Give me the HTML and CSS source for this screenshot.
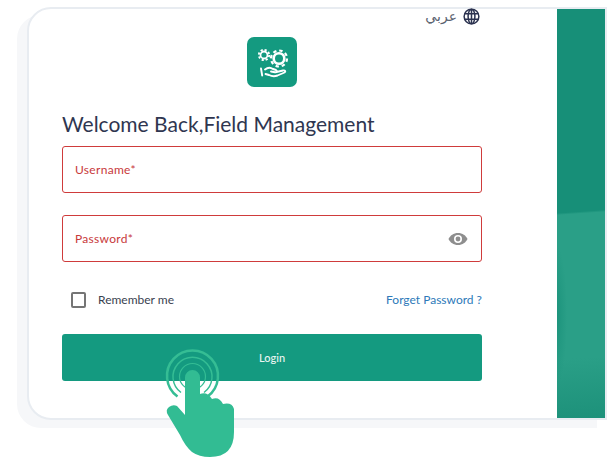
FILE: index.html
```html
<!DOCTYPE html>
<html lang="en">
<head>
<meta charset="utf-8">
<title>Login</title>
<link rel="stylesheet" href="styles.css">
</head>
<body>
<div class="card">
  <main class="form">
    <div class="lang">
      <span class="lang-text" lang="ar">عربي</span>
      <svg class="globe" viewBox="0 0 18 18" aria-hidden="true">
        <circle cx="9" cy="9" r="7.800"/>
        <ellipse cx="9" cy="9" rx="3.600" ry="7.800"/>
        <path d="M1.800 6.200h14.400M1.800 11.800h14.400M9 1.200v15.600"/>
      </svg>
    </div>
    <div class="logo">
      <svg viewBox="0 0 50 50" aria-hidden="true">
        <circle class="gear" cx="17" cy="18" r="3.500"/>
        <circle class="teeth small" cx="17" cy="18" r="5.200"/>
        <circle class="gear big" cx="32" cy="21.500" r="5.300"/>
        <circle class="teeth large" cx="32" cy="21.500" r="8"/>
        <path class="hand" d="M14 31.500l1.200 7M18 32.500c3-2.500 5.500-2.300 8-.5l3 1c1.500.8.800 2.500-1 2.300l-4-.8M29.500 35l6.500-1.500c2.300-.4 3 1 1.500 2l-7 3c-3 1.200-6.500.5-8.500-.5l-3.500-1"/>
      </svg>
    </div>
    <h1 class="title">Welcome Back,Field Management</h1>
    <div class="field">
      <span class="label">Username*</span>
    </div>
    <div class="field field-password">
      <span class="label">Password*</span>
      <svg class="eye" viewBox="0 0 20 14" aria-hidden="true">
        <path d="M10 1C5.600 1 2 3.600.5 7 2 10.400 5.600 13 10 13s8-2.600 9.500-6C18 3.600 14.400 1 10 1z"/>
        <circle class="eye-white" cx="10" cy="7" r="4"/>
        <circle cx="10" cy="7" r="2.400"/>
      </svg>
    </div>
    <div class="options">
      <label class="remember"><span class="checkbox"></span><span>Remember me</span></label>
      <a class="forgot">Forget Password ?</a>
    </div>
    <button class="login" type="button">Login</button>
  </main>
  <aside class="panel"></aside>
</div>
<svg class="hand-cursor" viewBox="160 345 80 115" aria-hidden="true">
  <g class="rings">
    <path class="ring-outer" d="M177.500 396.500A25.500 25.500 0 1 1 207.500 396.500"/>
    <path class="ring-mid" d="M181 392.500A19.500 19.500 0 1 1 204 392.500"/>
    <circle cx="192.500" cy="376.500" r="13"/>
  </g>
  <path class="finger" d="M185 377.500A7.500 7.500 0 0 1 200 377.500V394Q207 391 212 399Q219 396 223 404Q232 402 234 409V432Q234 457 210 457Q199 457 192 452Q185 446 180 435L168 415Q165 410 169 407Q173 404 177 406L185 415Z"/>
</svg>
</body>
</html>
```
FILE: styles.css
```css
* { box-sizing: border-box; }
html, body { margin: 0; padding: 0; }
body {
  width: 612px;
  height: 464px;
  background: #fff;
  padding: 7px 0 0 27px;
  font-family: "Lato", "Noto Sans", sans-serif;
  position: relative;
  overflow: hidden;
}
.card {
  width: 580px;
  height: 413px;
  display: flex;
  background: #fff;
  border: 2px solid #e8ecf1;
  border-radius: 24px 0 0 24px;
  box-shadow: -10px 8px 0 #f6f7f9;
}
.form {
  width: 528px;
  padding: 0 75px 0 33px;
  display: flex;
  flex-direction: column;
}
.lang {
  height: 14px;
  display: flex;
  justify-content: flex-end;
  align-items: center;
  gap: 6px;
  padding-right: 2px;
}
.lang-text { font-family: "DejaVu Sans", sans-serif; font-size: 14px; color: #5b6270; line-height: 14px; }
.globe { width: 17px; height: 17px; flex: none; fill: none; stroke: #2c3350; stroke-width: 1.6; }
.logo {
  width: 50px;
  height: 50px;
  margin: 14px auto 0;
  background: #149a80;
  border-radius: 7px;
}
.logo svg { display: block; width: 50px; height: 50px; fill: none; stroke: #fff; stroke-linecap: round; stroke-linejoin: round; }
.gear { stroke-width: 1.800; }
.gear.big { stroke-width: 2.600; }
.teeth { stroke-linecap: butt; }
.teeth.small { stroke-width: 1.800; stroke-dasharray: 2.200 1.880; }
.teeth.large { stroke-width: 2.200; stroke-dasharray: 3.400 2.880; }
.hand { stroke-width: 1.900; }
.title {
  margin: 22px 0 0;
  font-size: 21px;
  line-height: 30px;
  font-weight: 400;
  color: #2f3650;
  white-space: nowrap;
}
.field {
  height: 47px;
  margin-top: 7px;
  border: 1px solid #cf3b3b;
  border-radius: 3px;
  padding: 0 12px;
  display: flex;
  align-items: center;
  justify-content: space-between;
}
.field-password { margin-top: 22px; }
.label { font-size: 12px; color: #c8393b; letter-spacing: .3px; }
.eye { width: 20px; height: 14px; fill: #8e8e8e; margin-right: 1px; }
.eye-white { fill: #fff; }
.options {
  display: flex;
  justify-content: space-between;
  align-items: center;
  margin-top: 27px;
  height: 21px;
}
.remember { display: flex; align-items: center; gap: 12px; font-size: 12px; color: #3a3f50; padding-left: 9px; }
.checkbox { width: 15px; height: 16px; border: 2px solid #757575; border-radius: 2px; }
.forgot { font-size: 12px; color: #2d79b9; }
.login {
  height: 47px;
  margin-top: 24px;
  border: 0;
  border-radius: 3px;
  background: #149a80;
  color: #e8f5f2;
  font: 500 11px "Lato", sans-serif;
}
.panel {
  flex: 1;
  background:
    radial-gradient(ellipse 10px 70px at 0 75%, rgba(23,143,120,.7), rgba(23,143,120,0)),
    linear-gradient(176deg, #178f78 0, #178f78 49.500%, #2a9f87 50%, #2a9f87 85%, #1d917a 100%);
}
.hand-cursor {
  position: absolute;
  left: 160px;
  top: 345px;
  width: 80px;
  height: 115px;
  fill: none;
}
.rings { stroke: #35bd94; }
.ring-outer { stroke-width: 2.500; }
.ring-mid { stroke-width: 1.500; }
.rings circle { stroke-width: 1.200; }
.finger { fill: #32bc93; }
```
